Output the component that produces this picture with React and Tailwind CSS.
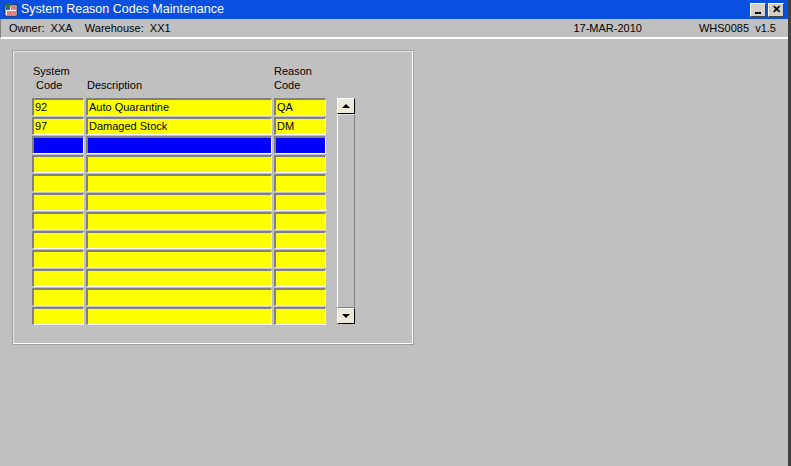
export default function App() {
  const rows = [
    ["92", "Auto Quarantine", "QA"],
    ["97", "Damaged Stock", "DM"],
    ["", "", "", true],
    ...Array.from({ length: 9 }, () => ["", "", ""]),
  ];
  const cell = (sel) =>
    `h-[18px] border-t-2 border-l-2 border-b border-r border-t-[#808080] border-l-[#808080] border-b-white border-r-white px-[1px] leading-[14px] ${sel ? "bg-[#0000ff]" : "bg-[#ffff00]"}`;
  return (
    <div className="w-[791px] h-[466px] bg-[#c0c0c0] text-[11px] text-black flex flex-col border-r-[3px] border-r-[#404040] overflow-hidden" style={{ fontFamily: '"Liberation Sans", Arial, sans-serif' }}>
      <div className="h-[19px] bg-[#0a50e0] flex items-center pl-[4px] pr-[4px] shrink-0">
        <svg width="15" height="14" viewBox="0 0 15 14">
          <rect x="1" y="2" width="12" height="11" fill="#fff" stroke="#333" />
          <rect x="2" y="3" width="4" height="4" fill="#3060c0" />
          <path d="M7 4h5M7 6h5M3 9h9M3 11h9" stroke="#c00" />
          <circle cx="4" cy="3" r="2.5" fill="#2a7a3a" />
        </svg>
        <span className="ml-[2px] text-white text-[12.5px]">System Reason Codes Maintenance</span>
        <div className="ml-auto flex gap-[2px]">
          <div className="w-[16px] h-[14px] bg-[#d4d0c8] border border-t-white border-l-white border-b-[#404040] border-r-[#404040] flex items-end justify-center pb-[2px]">
            <div className="w-[6px] h-[2px] bg-black" />
          </div>
          <div className="w-[16px] h-[14px] bg-[#d4d0c8] border border-t-white border-l-white border-b-[#404040] border-r-[#404040] flex items-center justify-center text-[11px] font-bold leading-none">✕</div>
        </div>
      </div>
      <div className="h-[20px] flex items-center pl-[8px] pr-[12px] border-l border-l-[#808080] border-b-2 border-b-white shrink-0">
        <span>Owner:&nbsp; XXA&nbsp;&nbsp;&nbsp; Warehouse:&nbsp; XX1</span>
        <span className="ml-auto">17-MAR-2010</span>
        <span className="ml-[57px]">WHS0085&nbsp; v1.5</span>
      </div>
      <div className="pl-[13px] pt-[12px]">
        <div className="w-[400px] h-[293px] border border-t-[#e8e8e8] border-l-[#e8e8e8] border-b-white border-r-white outline outline-1 outline-[#a0a0a0] pl-[18px] pt-[12px]">
          <div className="flex h-[34px] leading-[14px]">
            <div className="w-[54px] pl-[1px]">System<br /><span className="pl-[3px]">Code</span></div>
            <div className="w-[188px] pt-[14px] pl-[1px]">Description</div>
            <div className="w-[52px]">Reason<br />Code</div>
          </div>
          <div className="flex">
            <div className="flex flex-col gap-[1px]">
              {rows.map((r, i) => (
                <div key={i} className="flex gap-[2px]">
                  <div className={`w-[52px] ${cell(r[3])}`}>{r[0]}</div>
                  <div className={`w-[186px] ${cell(r[3])}`}>{r[1]}</div>
                  <div className={`w-[52px] ${cell(r[3])}`}>{r[2]}</div>
                </div>
              ))}
            </div>
            <div className="ml-[11px] w-[18px] h-[226px] flex flex-col bg-[#c0c0c0]">
              <div className="h-[16px] bg-[#ece9d8] border border-t-white border-l-white border-b-black border-r-black flex items-center justify-center">
                <div className="w-0 h-0 border-l-4 border-r-4 border-b-4 border-l-transparent border-r-transparent border-b-black" />
              </div>
              <div className="flex-1 border border-t-[#e0e0e0] border-l-white border-r-[#808080] border-b-[#808080]" />
              <div className="h-[16px] bg-[#ece9d8] border border-t-white border-l-white border-b-black border-r-black flex items-center justify-center">
                <div className="w-0 h-0 border-l-4 border-r-4 border-t-4 border-l-transparent border-r-transparent border-t-black" />
              </div>
            </div>
          </div>
        </div>
      </div>
    </div>
  );
}
